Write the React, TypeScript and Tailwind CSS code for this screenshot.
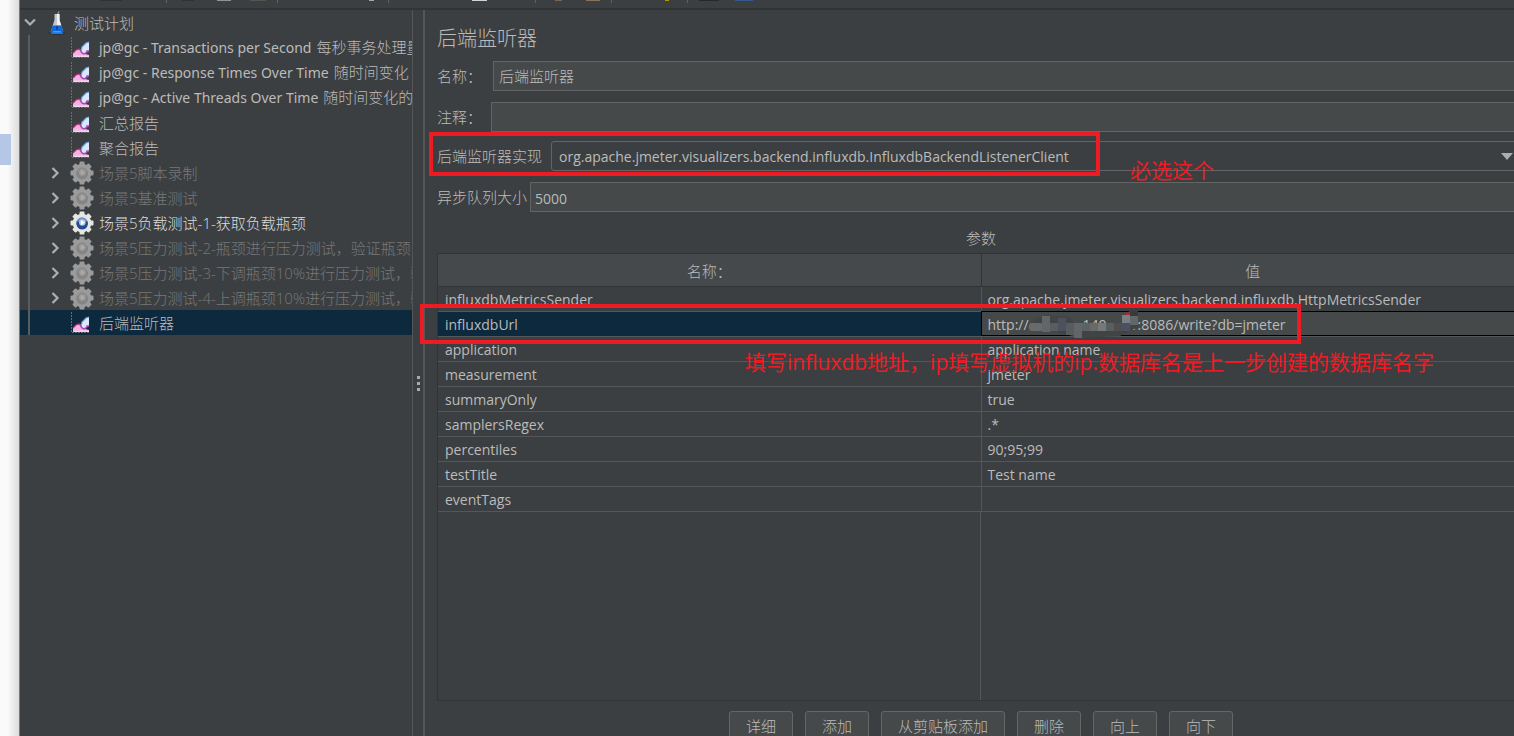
import React, { useState } from "react";
import clsx from "clsx";

type NodeIcon = "flask" | "chart" | "gear" | "gear-active";

type TreeNode = {
  prefix?: string;
  label: string;
  icon: NodeIcon;
  selected?: boolean;
};

const children: TreeNode[] = [
  { prefix: "jp@gc - Transactions per Second", label: "每秒事务处理量", icon: "chart" },
  { prefix: "jp@gc - Response Times Over Time", label: "随时间变化", icon: "chart" },
  { prefix: "jp@gc - Active Threads Over Time", label: "随时间变化的", icon: "chart" },
  { label: "汇总报告", icon: "chart" },
  { label: "聚合报告", icon: "chart" },
  { label: "场景5脚本录制", icon: "gear" },
  { label: "场景5基准测试", icon: "gear" },
  { label: "场景5负载测试-1-获取负载瓶颈", icon: "gear-active" },
  { label: "场景5压力测试-2-瓶颈进行压力测试，验证瓶颈", icon: "gear" },
  { label: "场景5压力测试-3-下调瓶颈10%进行压力测试，验", icon: "gear" },
  { label: "场景5压力测试-4-上调瓶颈10%进行压力测试，验", icon: "gear" },
  { label: "后端监听器", icon: "chart", selected: true },
];

const params = [
  { name: "influxdbMetricsSender", value: "org.apache.jmeter.visualizers.backend.influxdb.HttpMetricsSender" },
  { name: "influxdbUrl", value: "" },
  { name: "application", value: "application name" },
  { name: "measurement", value: "jmeter" },
  { name: "summaryOnly", value: "true" },
  { name: "samplersRegex", value: ".*" },
  { name: "percentiles", value: "90;95;99" },
  { name: "testTitle", value: "Test name" },
  { name: "eventTags", value: "" },
];

const actions = ["详细", "添加", "从剪贴板添加", "删除", "向上", "向下"];

const implementation = "org.apache.jmeter.visualizers.backend.influxdb.InfluxdbBackendListenerClient";

function FlaskIcon() {
  return (
    <svg width="16" height="24" viewBox="0 0 16 24" className="shrink-0">
      <ellipse cx="8" cy="22" rx="8" ry="1.8" fill="#2a2d2f" />
      <path d="M8.5 3.5 L10 0.5" stroke="#8b8d8e" strokeWidth="1.5" />
      <path d="M5.5 3h5v6l3.6 11.2q.6 2.3-1.6 2.3h-9q-2.2 0-1.6-2.3L5.5 9z" fill="#c3c7ca" />
      <path d="M8 3h2.5v6l1.6 5H8z" fill="#f2f2f2" />
      <path d="M3.6 14.5h8.8l1.8 6q.5 2-1.6 2h-9.2q-2 0-1.6-2z" fill="#1268d8" />
      <path d="M7 15h2v4H7z" fill="#0a48a8" />
      <path d="M4 20h8v1.5H4z" fill="#3f9bf5" />
    </svg>
  );
}

function ChartIcon() {
  return (
    <svg width="20" height="22" viewBox="0 0 20 22" className="shrink-0">
      <path d="M1.5 0v20.5H20" fill="none" stroke="#6a6c70" strokeDasharray="2 1" />
      <path d="M3 20v-4l3-3 3-1 3 2 3 3 4 1v2z" fill="#f5b0e6" />
      <path d="M3 16l3-3 3-1 2 1" fill="none" stroke="#c22a72" strokeWidth="1.2" />
      <path d="M11 14l1-4 4-4 3-1v9l-3 2-2 2z" fill="#d9e8fb" />
      <path d="M11 14l1-4 4-4 3-1" fill="none" stroke="#6f9fe0" strokeWidth="1.2" />
      <path d="M10 13l2 3 2 1 2-1 1-2 2 0" fill="none" stroke="#a548b4" strokeWidth="1.4" />
      <path d="M4 18.5h15V20H4z" fill="#f3d4ea" />
    </svg>
  );
}

function GearIcon({ active }: { active?: boolean }) {
  const body = active ? "#e6e6e3" : "#9b9b9b";
  return (
    <svg width="24" height="24" viewBox="0 0 24 24" className="shrink-0">
      {[0, 45, 90, 135].map((deg) => (
        <rect key={deg} x="9.5" y="0.5" width="5" height="23" rx="1" fill={body} transform={`rotate(${deg} 12 12)`} />
      ))}
      <circle cx="12" cy="12" r="9.3" fill={body} />
      <circle cx="12" cy="12" r="5.8" fill={active ? "#6d92c8" : "#8a8a8a"} />
      <path d="M6.8 10.5a5.8 5.8 0 1 0 10.8 0z" fill={active ? "#204b90" : "#858585"} />
      <circle cx="12.3" cy="11.5" r="3.2" fill={active ? "#b9cce6" : "#9d9d9d"} />
      <path d="M11 9.2l4 2.3-4 2.5z" fill={active ? "#ffffff" : "#aaaaaa"} />
    </svg>
  );
}

function Chevron({ open }: { open?: boolean }) {
  return (
    <svg width="12" height="12" viewBox="0 0 12 12" className="shrink-0">
      <path
        d={open ? "M1 2.5l5 5 5-5" : "M2.5 1l5 5-5 5"}
        fill="none"
        stroke="#adafb0"
        strokeWidth="2.2"
      />
    </svg>
  );
}

function NodeGlyph({ icon }: { icon: NodeIcon }) {
  if (icon === "flask") return <FlaskIcon />;
  if (icon === "chart") return <ChartIcon />;
  return <GearIcon active={icon === "gear-active"} />;
}

// Lower edge of the main toolbar: separators and the bottoms of its icons
function ToolbarEdge() {
  return (
    <svg width="800" height="4" viewBox="0 0 800 4" className="block">
      {[166, 277, 388, 535, 611, 687].map((x) => (
        <rect key={x} x={x} y="0" width="1" height="3" fill="#606365" />
      ))}
      <rect x="100" y="0" width="22" height="1" fill="#303234" />
      <rect x="182" y="0" width="12" height="1" fill="#303234" />
      <rect x="217" y="0" width="14" height="1" fill="#8d9690" />
      <rect x="250" y="0" width="16" height="1" fill="#55554c" />
      <rect x="369" y="0" width="5" height="1" fill="#a5a8aa" />
      <rect x="472" y="0" width="15" height="1" fill="#d2d4ce" />
      <rect x="555" y="0" width="7" height="1" fill="#7c6650" />
      <rect x="586" y="0" width="14" height="1" fill="#8a7355" />
      <rect x="665" y="0" width="4" height="1" fill="#b59500" />
      <rect x="699" y="0" width="20" height="1" fill="#26282a" />
      <rect x="735" y="0" width="18" height="1" fill="#35588c" />
    </svg>
  );
}

function Mosaic() {
  return (
    <svg width="112" height="28" viewBox="0 0 112 28" className="absolute -top-1 left-0">
      <path d="M4 8l14-4 26 3v5h49V5l16-3v14l-18 9-40 2-30-8-16-2z" fill="#404445" />
      <rect x="0" y="12" width="14" height="8" rx="3" fill="#686a6c" />
      <rect x="13" y="5" width="8" height="16" fill="#626669" />
      <rect x="21" y="12" width="8" height="8" fill="#595d5f" />
      <rect x="29" y="7" width="8" height="13" fill="#4d515c" />
      <rect x="37" y="12" width="8" height="12" fill="#585c5e" />
      <rect x="45" y="12" width="8" height="15" fill="#636667" />
      <rect x="53" y="12" width="8" height="8" fill="#5d6163" />
      <rect x="61" y="12" width="8" height="8" fill="#67696a" />
      <rect x="69" y="12" width="8" height="8" fill="#76787a" />
      <rect x="77" y="12" width="8" height="8" fill="#595c60" />
      <rect x="85" y="12" width="8" height="8" fill="#514e50" />
      <path d="M93 5l8-5v5z" fill="#b3252c" />
      <rect x="93" y="4" width="8" height="8" fill="#7a7f86" />
      <rect x="93" y="12" width="8" height="8" fill="#4d5064" />
      <rect x="101" y="0" width="8" height="5" fill="#363a3b" />
      <rect x="101" y="5" width="8" height="9" fill="#606868" />
    </svg>
  );
}

export default function App() {
  const [name, setName] = useState("后端监听器");
  const [comment, setComment] = useState("");
  const [queueSize, setQueueSize] = useState("5000");

  const field = "h-[30px] min-w-0 flex-1 border border-[#646464] bg-[#45494a] outline-none";

  return (
    <div className="flex h-screen overflow-hidden bg-[#3c3f41] font-['Open_Sans','Noto_Sans_CJK_SC',sans-serif] text-[14px] leading-5 text-[#bbbbbb]">
      <div className="w-5 shrink-0 border-r border-[#77797a] bg-linear-to-r from-[#fafafa] from-40% to-[#dcdcdc] pt-[134px]">
        <div className="h-[31px] w-[11px] bg-[#b5c7e7]" />
      </div>

      <div className="flex min-w-0 flex-1 flex-col">
        <header className="h-[10px] shrink-0 border-b-2 border-[#313335]">
          <div className="-ml-5">
            <ToolbarEdge />
          </div>
        </header>

        <div className="flex min-h-0 flex-1">
          <nav className="w-[393px] shrink-0 overflow-hidden border-r border-[#555555] whitespace-nowrap">
            <div className="flex h-[25px] items-center pl-[4px]">
              <Chevron open />
              <span className="ml-[13px] flex w-[25px] shrink-0">
                <NodeGlyph icon="flask" />
              </span>
              <span className="text-[15px] font-light">测试计划</span>
            </div>
            <ul>
              {children.map((node) => (
                <li
                  key={(node.prefix ?? "") + node.label}
                  className={clsx("pl-2", node.selected && "bg-[#0d293e]")}
                >
                  <div className="flex h-[25px] items-center border-l-2 border-[#5a5c5e] pl-5">
                    <span className="flex w-5 shrink-0">{node.icon.startsWith("gear") && <Chevron />}</span>
                    <span className="flex w-[29px] shrink-0">
                      <NodeGlyph icon={node.icon} />
                    </span>
                    <span
                      className={clsx(
                        "text-[15px] font-light",
                        node.icon === "gear" && "text-[#777777]",
                        node.icon === "gear-active" && "text-[#dddddd]"
                      )}
                    >
                      {node.prefix && (
                        <span className="mr-[5px] font-['Noto_Sans',sans-serif] text-[14px] font-normal">{node.prefix}</span>
                      )}
                      {node.label}
                    </span>
                  </div>
                </li>
              ))}
            </ul>
          </nav>

          <div className="flex w-[12px] shrink-0 flex-col items-center justify-center gap-[3px] border-r-2 border-[#555555] pt-5">
            <i className="size-[3px] bg-[#aaaaaa]" />
            <i className="size-[3px] bg-[#aaaaaa]" />
            <i className="size-[3px] bg-[#aaaaaa]" />
          </div>

          <main className="relative -mr-[11px] flex min-w-0 flex-1 flex-col pl-3">
            <h1 className="pt-[15px] text-[20px] leading-7 font-light">后端监听器</h1>

            <div className="mt-2 flex items-center">
              <label htmlFor="name" className="w-14 text-[15px] font-light">名称：</label>
              <input id="name" value={name} onChange={(e) => setName(e.target.value)} className={clsx(field, "px-[5px] pb-0.5 text-[15px] font-light")} />
            </div>
            <div className="mt-[11px] flex items-center">
              <label htmlFor="comment" className="w-[54px] text-[15px] font-light">注释：</label>
              <input id="comment" value={comment} onChange={(e) => setComment(e.target.value)} className={clsx(field, "px-[5px]")} />
            </div>
            <div className="relative mt-[9px] flex items-center">
              <label htmlFor="impl" className="w-[114px] text-[15px] font-light">后端监听器实现</label>
              <select id="impl" className="h-[30px] min-w-0 flex-1 appearance-none rounded-[3px] border border-[#646464] bg-[#3c3f41] px-[7px] pt-0.5 outline-none">
                <option>{implementation}</option>
              </select>
              <svg width="12" height="7" viewBox="0 0 12 7" className="pointer-events-none absolute right-3">
                <path d="M0 0h12L6 7z" fill="#adadad" />
              </svg>
            </div>
            <div className="mt-[11px] flex items-center">
              <label htmlFor="queue" className="w-[93px] text-[15px] font-light">异步队列大小</label>
              <input id="queue" value={queueSize} onChange={(e) => setQueueSize(e.target.value)} className={clsx(field, "px-1 pt-0.5")} />
            </div>

            <h2 className="mt-4 text-center text-[15px] font-light">参数</h2>

            <div className="mt-[5px] flex min-h-0 flex-1 flex-col border border-[#313335]">
              <table className="w-full table-fixed border-collapse">
                <thead>
                  <tr className="h-8 border-b border-[#313335] bg-[#45494b] text-[15px]">
                    <th className="w-[calc(50%-1px)] border-r border-[#313335] pt-0.5 font-light">名称：</th>
                    <th className="pt-0.5 font-light">值</th>
                  </tr>
                </thead>
                <tbody>
                  {params.map((p) => (
                    <tr key={p.name} className="h-[25px] border-b border-[#54575a]">
                      <td className={clsx("border-r border-[#54575a] px-[7px] pt-0.5", p.name === "influxdbUrl" && "bg-[#0d293e]")}>
                        {p.name}
                      </td>
                      {p.name === "influxdbUrl" ? (
                        <td className="bg-[#45494a] px-[6px] pt-0.5 outline outline-black -outline-offset-1">
                          <span className="flex">
                            http://
                            <span className="relative w-[101px] pl-[54px]">
                              140
                              <Mosaic />
                            </span>
                            1:8086/write?db=jmeter
                          </span>
                        </td>
                      ) : (
                        <td className="px-[6px] pt-0.5">{p.value}</td>
                      )}
                    </tr>
                  ))}
                </tbody>
              </table>
              <div className="w-1/2 flex-1 border-r border-[#54575a]" />
            </div>

            <div className="flex h-[35px] shrink-0 justify-center gap-3 overflow-hidden pt-[10px]">
              {actions.map((label) => (
                <button
                  key={label}
                  type="button"
                  className="h-[29px] shrink-0 rounded-[3px] border border-[#646666] bg-[#45494a] px-4 text-[15px] font-light"
                >
                  {label}
                </button>
              ))}
            </div>

            {/* annotations */}
            <div className="pointer-events-none absolute top-[122px] left-[4px] h-[44px] w-[671px] border-4 border-[#ed1c24]" />
            <p className="pointer-events-none absolute top-[146px] left-[705px] text-[21px] leading-7 text-[#ed1c24]">必选这个</p>
            <div className="pointer-events-none absolute top-[294px] -left-[5px] h-[40px] w-[881px] border-4 border-[#ed1c24]" />
            <p className="pointer-events-none absolute top-[338px] left-[320px] text-[21px] leading-7 whitespace-nowrap text-[#ed1c24]">
              填写influxdb地址，ip填写虚拟机的ip.数据库名是上一步创建的数据库名字
            </p>
          </main>
        </div>
      </div>
    </div>
  );
}
